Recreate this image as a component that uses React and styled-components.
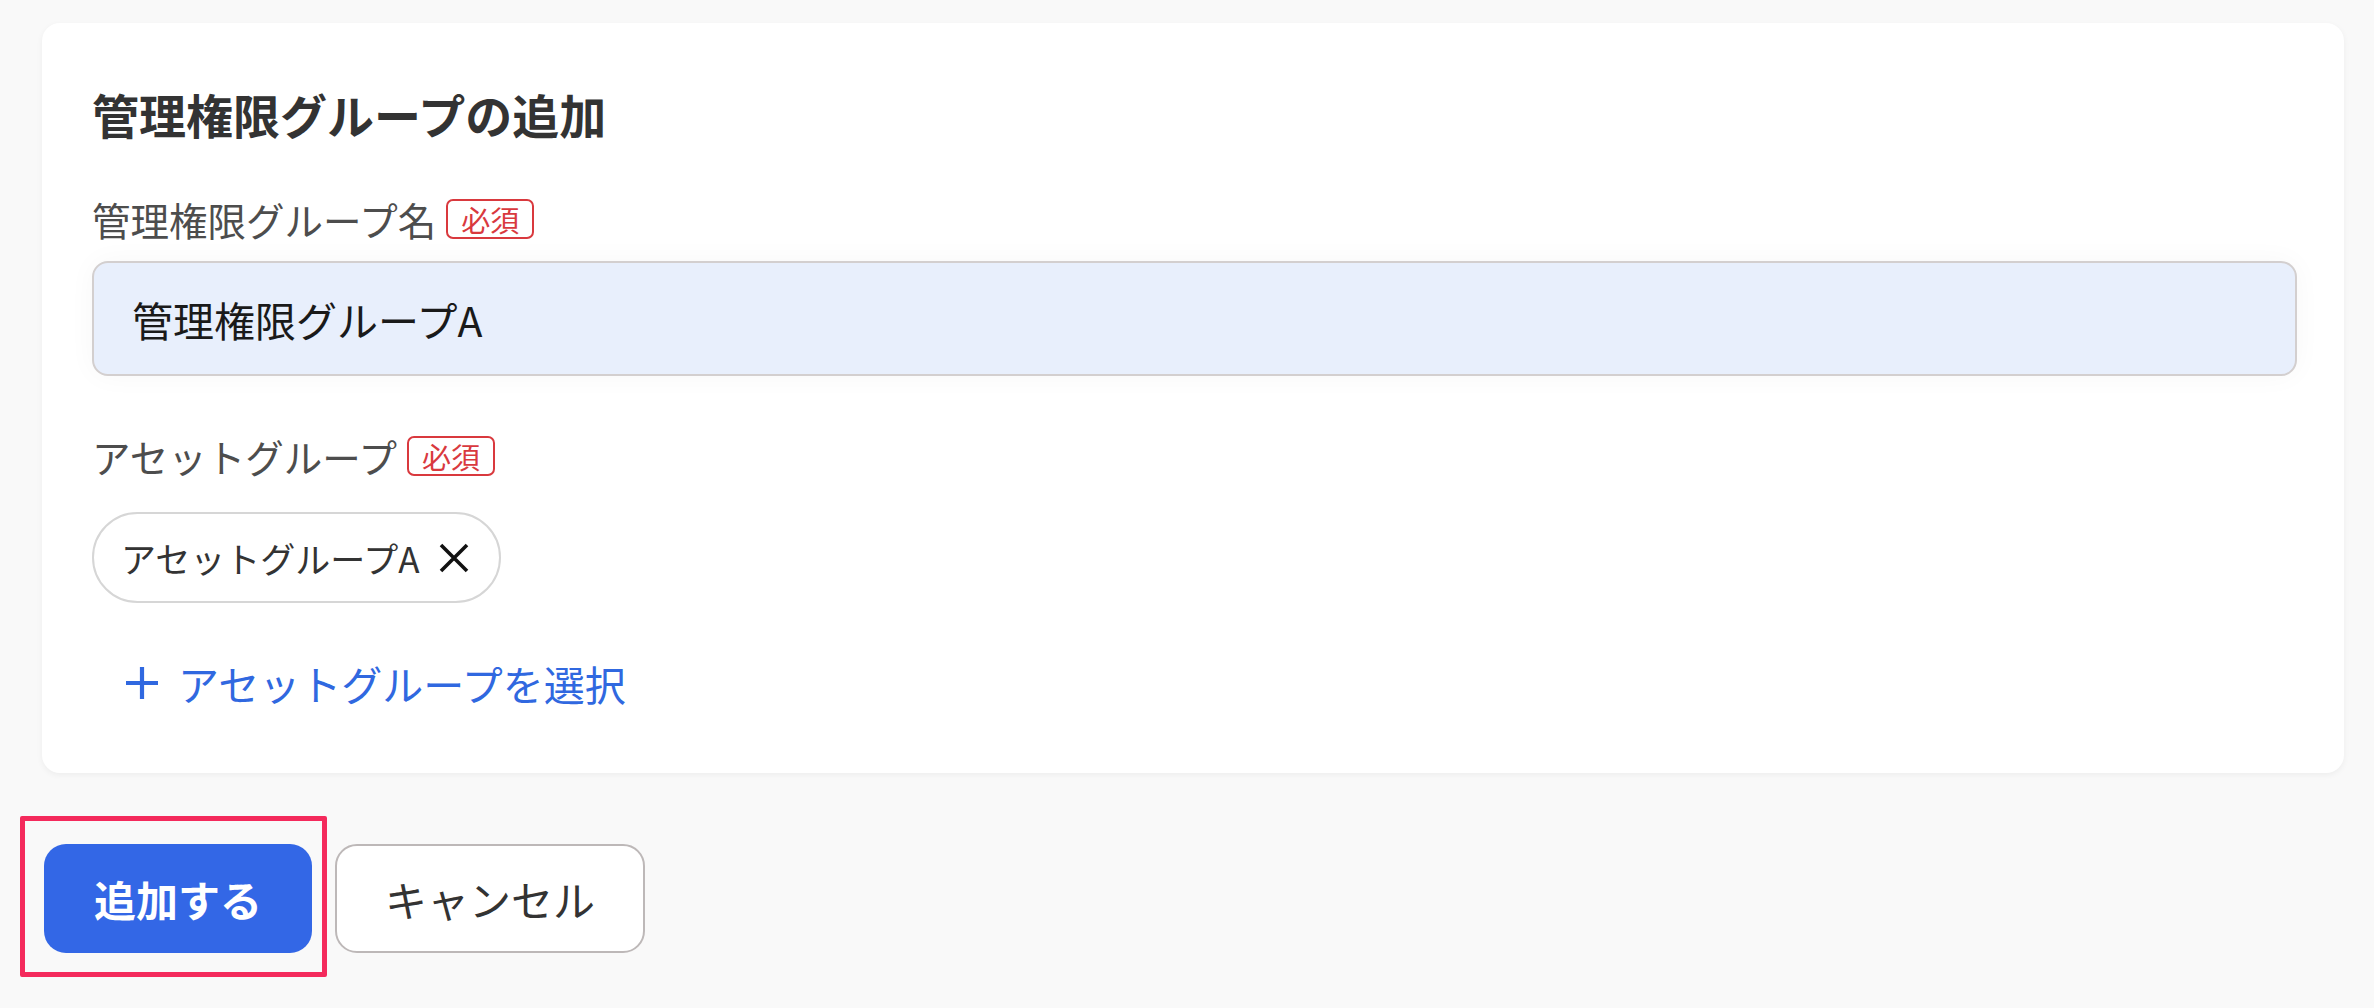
import React from "react";
import styled, { createGlobalStyle } from "styled-components";

const GlobalStyle = createGlobalStyle`
  html, body {
    margin: 0;
    padding: 0;
    background: #f9f9f9;
  }
  body {
    font-family: "Noto Sans CJK JP", "Noto Sans", sans-serif;
    color: #333;
  }
  * { box-sizing: border-box; }
`;

const Page = styled.div`
  min-height: 1008px;
  padding: 23px 30px 0 42px;
  background: #f9f9f9;
`;

const Card = styled.section`
  background: #fff;
  border-radius: 18px;
  box-shadow: 0 2px 6px rgba(0, 0, 0, 0.05);
  padding: 56px 47px 66px 50px;
  display: flex;
  flex-direction: column;
`;

const Title = styled.h2`
  margin: 0;
  font-size: 47px;
  line-height: 70px;
  font-weight: 700;
  color: #333;
`;

const LabelRow = styled.div`
  display: flex;
  align-items: center;
  gap: 10px;
  height: 48px;
  margin-top: ${(p) => p.$mt}px;
`;

const LabelText = styled.span`
  font-size: 38.5px;
  line-height: 48px;
  color: #4d4d4d;
`;

const Badge = styled.span`
  display: inline-flex;
  align-items: center;
  justify-content: center;
  height: 40px;
  padding: 0 13px;
  border: 2px solid #d9393e;
  border-radius: 7px;
  color: #d9393e;
  font-size: 29px;
  line-height: 1;
  background: #fff;
`;

const TextInput = styled.input`
  margin-top: 18px;
  width: 100%;
  height: 115px;
  padding: 0 38px;
  background: #e8effc;
  border: 2px solid #d3cfcf;
  border-radius: 16px;
  font-family: "Noto Sans CJK JP", "Noto Sans", sans-serif;
  font-size: 41px;
  color: #1a1a1a;
  outline: none;
  box-shadow: 0 0 28px rgba(0, 0, 0, 0.035);
`;

const ChipList = styled.div`
  margin-top: 32px;
  display: flex;
  gap: 16px;
`;

const Chip = styled.div`
  display: inline-flex;
  align-items: center;
  gap: 18px;
  height: 91px;
  padding: 0 28px 0 27px;
  border: 2px solid #d6d6d6;
  border-radius: 46px;
  background: #fff;
  font-size: 35px;
  color: #333;
`;

const IconButton = styled.button`
  display: inline-flex;
  align-items: center;
  justify-content: center;
  padding: 0;
  border: none;
  background: none;
  cursor: pointer;
`;

const AddLink = styled.button`
  margin-top: 56px;
  align-self: flex-start;
  display: inline-flex;
  align-items: center;
  gap: 18px;
  height: 48px;
  padding: 0 0 0 32px;
  border: none;
  background: none;
  color: #3068e0;
  font-family: "Noto Sans CJK JP", "Noto Sans", sans-serif;
  font-size: 41px;
  cursor: pointer;
`;

const Actions = styled.div`
  margin-top: 71px;
  display: flex;
  gap: 23px;
  padding-left: 2px;
`;

const Highlight = styled.div`
  position: relative;
  display: inline-flex;
  &::after {
    content: "";
    position: absolute;
    top: -28px;
    left: -24px;
    right: -15px;
    bottom: -24px;
    border: 5px solid #f42a5c;
    border-radius: 2px;
    pointer-events: none;
  }
`;

const Button = styled.button`
  height: 109px;
  width: ${(p) => p.$w}px;
  border-radius: 22px;
  font-family: "Noto Sans CJK JP", "Noto Sans", sans-serif;
  font-size: 42px;
  font-weight: ${(p) => (p.$primary ? 700 : 400)};
  color: ${(p) => (p.$primary ? "#fff" : "#333")};
  background: ${(p) => (p.$primary ? "#3367e6" : "#fff")};
  border: ${(p) => (p.$primary ? "none" : "2px solid #bdb8b8")};
  cursor: pointer;
`;

const CloseIcon = () => (
  <svg width="34" height="34" viewBox="0 0 34 34">
    <path d="M4 4 L30 30 M30 4 L4 30" stroke="#111" strokeWidth="3.6" />
  </svg>
);

const PlusIcon = () => (
  <svg width="36" height="36" viewBox="0 0 36 36">
    <path d="M18 2 V34 M2 18 H34" stroke="#3068e0" strokeWidth="4.2" />
  </svg>
);

export default function App() {
  return (
    <Page>
      <GlobalStyle />
      <Card>
        <Title>管理権限グループの追加</Title>
        <LabelRow $mt={46}>
          <LabelText>管理権限グループ名</LabelText>
          <Badge>必須</Badge>
        </LabelRow>
        <TextInput defaultValue="管理権限グループA" />
        <LabelRow $mt={56}>
          <LabelText>アセットグループ</LabelText>
          <Badge>必須</Badge>
        </LabelRow>
        <ChipList>
          <Chip>
            アセットグループA
            <IconButton aria-label="削除">
              <CloseIcon />
            </IconButton>
          </Chip>
        </ChipList>
        <AddLink>
          <PlusIcon />
          アセットグループを選択
        </AddLink>
      </Card>
      <Actions>
        <Highlight>
          <Button $primary $w={268}>追加する</Button>
        </Highlight>
        <Button $w={310}>キャンセル</Button>
      </Actions>
    </Page>
  );
}
